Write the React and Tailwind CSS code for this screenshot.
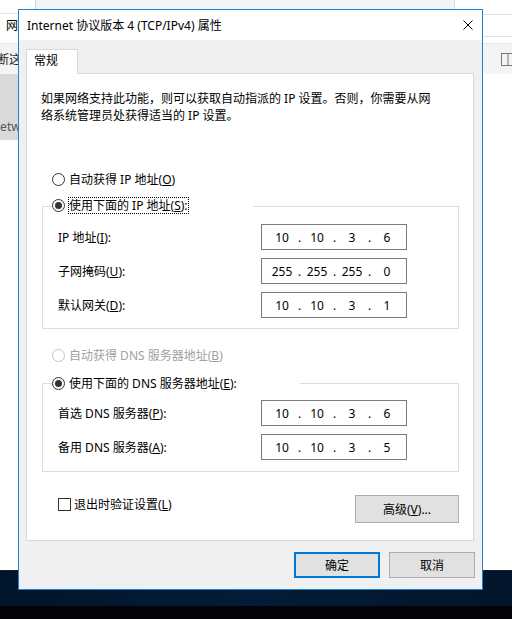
import React from "react";

// Radio de estilo Windows 10
const Radio = ({ checked = false, disabled = false, focused = false, children }) => (
  <div className="flex items-center h-[17px]">
    <span
      className={`w-[13px] h-[13px] rounded-full border bg-white flex items-center justify-center shrink-0 ${
        disabled ? "border-[#c4c4c4]" : "border-[#333333]"
      }`}
    >
      {checked && <span className="w-[7px] h-[7px] rounded-full bg-[#333333]" />}
    </span>
    <span
      className={`ml-[3px] h-[17px] flex items-center border border-dotted whitespace-nowrap ${
        focused ? "border-black" : "border-transparent"
      } ${disabled ? "text-[#a0a0a0]" : "text-black"}`}
    >
      {children}
    </span>
  </div>
);

const IpField = ({ parts }) => (
  <div className="w-[146px] h-[26px] border border-[#7a7a7a] bg-white flex items-center pl-[6px]">
    {parts.map((p, i) => (
      <React.Fragment key={i}>
        {i > 0 && <span className="w-[7px] text-center">.</span>}
        <span className="w-[28px] text-center">{p}</span>
      </React.Fragment>
    ))}
  </div>
);

const FieldRow = ({ label, parts, className = "" }) => (
  <div className={`flex items-center h-[26px] pl-[15px] ${className}`}>
    <span className="w-[203px] whitespace-nowrap">{label}</span>
    <IpField parts={parts} />
  </div>
);

export default function App() {
  return (
    <div className="relative w-[512px] h-[619px] overflow-hidden bg-white font-['Noto_Sans','Noto_Sans_CJK_SC',sans-serif] text-[12px] leading-[17px] text-black">
      {/* Ventana de fondo (Conexiones de red) */}
      <div className="flex flex-col h-full">
        <div className="h-[570px] flex flex-col">
          <div className="h-[44px] flex border-b border-[#e5e5e5]">
            <div className="w-[36px] flex flex-col border-r border-[#d4d4d4]">
              <div className="h-[14px] border-b border-[#e5e5e5]" />
              <div className="pt-[3px] pl-[6px]">网</div>
            </div>
            <div className="flex-1 bg-[#f3f3f3] border-r border-[#d9d9d9]" />
            <div className="w-[57px] pt-[14px]">
              <div className="h-[23px] border-y border-[#e3e3e3]" />
            </div>
          </div>
          <div className="h-[30px] flex items-center bg-[#f4f4f4]">
            <div className="w-[18px] overflow-hidden">
              <span className="block -ml-[15px] whitespace-nowrap text-[#1e1e1e]">诊断这个连接</span>
            </div>
            <svg className="ml-auto -mr-[3px]" width="14" height="13" viewBox="0 0 14 13">
              <rect x="0.5" y="0.5" width="13" height="12" fill="none" stroke="#7a7a7a" />
              <path d="M7 0.5V12.5" stroke="#7a7a7a" />
            </svg>
          </div>
          <div className="flex-1">
            <div className="w-[120px] h-[66px] bg-[#d9d9d9] pt-[44px]">
              <div className="w-[18px] overflow-hidden">
                <span className="-ml-[9px] block whitespace-nowrap text-[#555555]">Network</span>
              </div>
            </div>
          </div>
        </div>
        <div className="h-[36px] bg-gradient-to-r from-[#01152a] via-[#031d38] to-[#02152a] border-t border-[#0d2236]" />
        <div className="flex-1 bg-[#020408]" />
      </div>

      {/* Diálogo de propiedades */}
      <div className="absolute left-[18px] top-[9px] w-[465px] h-[581px] border border-[#1883d7] bg-[#f0f0f0] flex flex-col">
        <div className="h-[30px] bg-white flex items-center justify-between pl-[8px] pr-[9px] shrink-0">
          <span className="whitespace-nowrap">Internet 协议版本 4 (TCP/IPv4) 属性</span>
          <svg width="10" height="10" viewBox="0 0 10 10">
            <path d="M0.5 0.5L9.5 9.5M9.5 0.5L0.5 9.5" stroke="#000000" strokeWidth="1" />
          </svg>
        </div>

        <div className="flex-1 flex flex-col pt-[9px] pl-[7px]">
          {/* Pestaña */}
          <div className="relative z-10 -mb-px w-[52px] h-[25px] bg-white border-t border-l border-r border-[#d9d9d9] pl-[7px] pt-[2px]">
            常规
          </div>

          {/* Panel */}
          <div className="w-[448px] h-[468px] border border-[#d9d9d9] bg-white pl-[15px]">
            <div className="mt-[16px] -ml-px whitespace-nowrap">
              <div>如果网络支持此功能，则可以获取自动指派的 IP 设置。否则，你需要从网</div>
              <div>络系统管理员处获得适当的 IP 设置。</div>
            </div>

            <div className="mt-[47px] ml-[10px]">
              <Radio>
                自动获得 IP 地址(<u>O</u>)
              </Radio>
            </div>

            <div className="mt-[18px] w-[417px] border border-[#dcdcdc] pb-[10px]">
              <div className="-mt-[10px] ml-[9px] w-[201px] bg-white">
                <Radio checked focused>
                  使用下面的 IP 地址(<u>S</u>):
                </Radio>
              </div>
              <FieldRow className="mt-[10px]" label={<>IP 地址(<u>I</u>):</>} parts={["10", "10", "3", "6"]} />
              <FieldRow className="mt-[8px]" label={<>子网掩码(<u>U</u>):</>} parts={["255", "255", "255", "0"]} />
              <FieldRow className="mt-[8px]" label={<>默认网关(<u>D</u>):</>} parts={["10", "10", "3", "1"]} />
            </div>

            <div className="mt-[18px] ml-[10px]">
              <Radio disabled>
                自动获得 DNS 服务器地址(<u>B</u>)
              </Radio>
            </div>

            <div className="mt-[19px] w-[417px] border border-[#dcdcdc] pb-[11px]">
              <div className="-mt-[9px] ml-[9px] w-[248px] bg-white">
                <Radio checked>
                  使用下面的 DNS 服务器地址(<u>E</u>):
                </Radio>
              </div>
              <FieldRow className="mt-[8px]" label={<>首选 DNS 服务器(<u>P</u>):</>} parts={["10", "10", "3", "6"]} />
              <FieldRow className="mt-[8px]" label={<>备用 DNS 服务器(<u>A</u>):</>} parts={["10", "10", "3", "5"]} />
            </div>

            <div className="mt-[23px] w-[417px] flex items-start justify-between pl-[16px]">
              <div className="mt-px flex items-center h-[17px]">
                <span className="w-[13px] h-[13px] border border-[#333333] bg-white" />
                <span className="ml-[3px] whitespace-nowrap">
                  退出时验证设置(<u>L</u>)
                </span>
              </div>
              <button className="w-[104px] h-[28px] bg-[#e1e1e1] border border-[#adadad]">
                高级(<u>V</u>)...
              </button>
            </div>
          </div>

          {/* Botones */}
          <div className="mt-[11px] mr-[7px] flex justify-end gap-[9px]">
            <button className="w-[86px] h-[26px] bg-[#e1e1e1] border-2 border-[#0078d7]">确定</button>
            <button className="w-[86px] h-[26px] bg-[#e1e1e1] border border-[#adadad]">取消</button>
          </div>
        </div>
      </div>
    </div>
  );
}
